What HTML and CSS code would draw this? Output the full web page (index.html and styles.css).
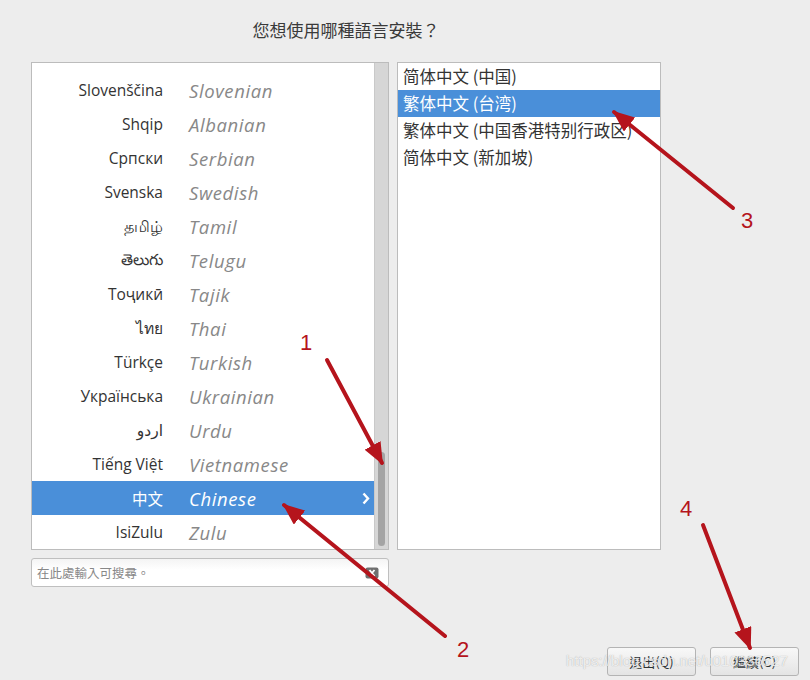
FILE: index.html
```html
<!DOCTYPE html>
<html lang="zh-Hant">
<head>
    <meta charset="UTF-8">
    <meta name="viewport" content="width=device-width, initial-scale=1.0">
    <title>語言選擇</title>
    <link rel="stylesheet" href="styles.css">
</head>
<body>
    <div class="installer">
        <h1 class="title">您想使用哪種語言安裝？</h1>

        <div class="lists">
            <div class="left-col">
                <div class="lang-list">
                    <div class="rows">
                        <div class="row"><span class="native">Slovenščina</span><span class="english">Slovenian</span></div>
                        <div class="row"><span class="native">Shqip</span><span class="english">Albanian</span></div>
                        <div class="row"><span class="native">Српски</span><span class="english">Serbian</span></div>
                        <div class="row"><span class="native">Svenska</span><span class="english">Swedish</span></div>
                        <div class="row"><span class="native">தமிழ்</span><span class="english">Tamil</span></div>
                        <div class="row"><span class="native">తెలుగు</span><span class="english">Telugu</span></div>
                        <div class="row"><span class="native">Тоҷикӣ</span><span class="english">Tajik</span></div>
                        <div class="row"><span class="native">ไทย</span><span class="english">Thai</span></div>
                        <div class="row"><span class="native">Türkçe</span><span class="english">Turkish</span></div>
                        <div class="row"><span class="native">Українська</span><span class="english">Ukrainian</span></div>
                        <div class="row"><span class="native">اردو</span><span class="english">Urdu</span></div>
                        <div class="row"><span class="native">Tiếng Việt</span><span class="english">Vietnamese</span></div>
                        <div class="row selected">
                            <span class="native">中文</span><span class="english">Chinese</span>
                            <svg class="chevron" width="8" height="13" viewBox="0 0 8 13"><polyline points="1.5,1.5 6,6.5 1.5,11.5" fill="none" stroke="#fff" stroke-width="2.4"/></svg>
                        </div>
                        <div class="row"><span class="native">IsiZulu</span><span class="english">Zulu</span></div>
                    </div>
                    <div class="scrollbar"><div class="thumb"></div></div>
                </div>

                <div class="search">
                    <span class="placeholder">在此處輸入可搜尋。</span>
                    <svg class="clear" width="14" height="12" viewBox="0 0 14 12">
                        <rect x="0.5" y="0.5" width="13" height="11" rx="2" fill="#6f6f6f"/>
                        <path d="M4.5 3 L9.5 9 M9.5 3 L4.5 9" stroke="#fff" stroke-width="1.8"/>
                    </svg>
                </div>
            </div>

            <div class="locale-list">
                <div class="locale">简体中文 (中国)</div>
                <div class="locale selected">繁体中文 (台湾)</div>
                <div class="locale">繁体中文 (中国香港特别行政区)</div>
                <div class="locale">简体中文 (新加坡)</div>
            </div>
        </div>

        <div class="actions">
            <button class="btn">退出(Q)</button>
            <button class="btn">繼續(C)</button>
        </div>
    </div>

    <div class="watermark">https://blog.csdn.net/u010336527</div>

    <svg class="notes" width="810" height="680" viewBox="0 0 810 680">
        <defs>
            <marker id="head" markerUnits="userSpaceOnUse" markerWidth="22" markerHeight="18" refX="20" refY="9" orient="auto">
                <polygon points="0,0 22,9 0,18" fill="#b5141c"/>
            </marker>
        </defs>
        <g stroke="#b5141c" stroke-width="4" stroke-linecap="round" marker-end="url(#head)">
            <line x1="327" y1="360" x2="382" y2="463"/>
            <line x1="445" y1="636" x2="284" y2="505"/>
            <line x1="733" y1="208" x2="614" y2="112"/>
            <line x1="703" y1="525" x2="750" y2="648"/>
        </g>
        <g class="num">
            <text x="300" y="350">1</text>
            <text x="457" y="657">2</text>
            <text x="741" y="228">3</text>
            <text x="680" y="516">4</text>
        </g>
    </svg>
</body>
</html>
```

FILE: styles.css
```css
* { margin: 0; padding: 0; box-sizing: border-box; }

body {
    font-family: 'Open Sans', 'Noto Sans', 'DejaVu Sans', 'Noto Sans CJK TC', sans-serif;
    background: #ededed;
    color: #2e3436;
    width: 810px;
    height: 680px;
    overflow: hidden;
    position: relative;
}

.installer {
    height: 680px;
    display: flex;
    flex-direction: column;
    padding: 19px 0 4px 31px;
}

.title {
    width: 630px;
    text-align: center;
    font-family: 'Noto Sans CJK TC', sans-serif;
    font-size: 17px;
    font-weight: 400;
    line-height: 22px;
    color: #3a3a3a;
}

.lists {
    display: flex;
    gap: 8px;
    margin-top: 21px;
}

.left-col {
    width: 358px;
    display: flex;
    flex-direction: column;
    gap: 8px;
}

.lang-list {
    height: 488px;
    display: flex;
    background: #fff;
    border: 1px solid #bcbcbc;
}

.rows {
    flex: 1;
    display: flex;
    flex-direction: column;
    justify-content: flex-end;
    overflow: hidden;
}

.row {
    height: 34px;
    display: grid;
    grid-template-columns: 131px 1fr auto;
    column-gap: 26px;
    align-items: center;
}

.native {
    text-align: right;
    font-size: 15.5px;
    color: #333;
}

.english {
    font-size: 18.5px;
    font-style: italic;
    letter-spacing: 0.6px;
    color: #888;
}

.row.selected { background: #4a8fd9; }
.row.selected .native,
.row.selected .english { color: #fff; }

.chevron { margin-right: 4px; }

.scrollbar {
    width: 14px;
    background: #d6d6d6;
    border-left: 1px solid #c9c9c9;
    display: flex;
    flex-direction: column;
    justify-content: flex-end;
    align-items: center;
    padding-bottom: 3px;
}

.thumb {
    width: 7px;
    height: 94px;
    background: #a4a4a4;
    border-radius: 4px;
}

.search {
    height: 29px;
    display: flex;
    align-items: center;
    justify-content: space-between;
    padding: 0 9px 0 5px;
    background: linear-gradient(#f4f4f4, #fff 40%);
    border: 1px solid #bfbfbf;
    border-radius: 3px;
}

.placeholder {
    font-family: 'Noto Sans CJK TC', sans-serif;
    font-size: 12.5px;
    color: #888;
}

.locale-list {
    width: 264px;
    height: 488px;
    background: #fff;
    border: 1px solid #bcbcbc;
    overflow: hidden;
}

.locale {
    height: 27px;
    line-height: 27px;
    padding-left: 5px;
    font-family: 'Noto Sans CJK SC', sans-serif;
    font-size: 16.5px;
    color: #333;
    white-space: nowrap;
}

.locale.selected { background: #4a8fd9; color: #fff; }

.actions {
    margin-top: auto;
    display: flex;
    justify-content: flex-end;
    gap: 14px;
    padding-right: 11px;
}

.btn {
    width: 89px;
    height: 29px;
    font-family: 'Noto Sans CJK TC', sans-serif;
    font-size: 13px;
    color: #2e3436;
    background: linear-gradient(#f8f8f8, #e4e4e4);
    border: 1px solid #b4b4b4;
    border-radius: 3px;
}

.watermark {
    position: absolute;
    left: 566px;
    top: 652px;
    font-family: 'Liberation Sans', sans-serif;
    font-size: 15px;
    color: rgba(255, 255, 255, 0.8);
    text-shadow: 0 0 1px rgba(90, 90, 90, 0.5);
    pointer-events: none;
}

.notes {
    position: absolute;
    inset: 0;
    pointer-events: none;
}

.num text {
    font-family: 'Liberation Sans', sans-serif;
    font-size: 22px;
    fill: #b5141c;
}
```
